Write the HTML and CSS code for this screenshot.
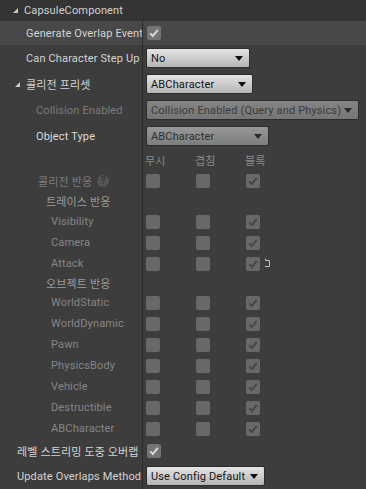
FILE: index.html
```html
<!DOCTYPE html>
<html lang="ko">
<head>
    <meta charset="UTF-8">
    <title>CapsuleComponent</title>
    <link rel="stylesheet" href="styles.css">
</head>
<body>
    <div class="panel">
        <!-- Заголовок категории -->
        <div class="cat-header">
            <span class="arrow"></span>
            <span>CapsuleComponent</span>
        </div>

        <div class="row row-hl h24">
            <div class="label l1">Generate Overlap Events</div>
            <div class="val"><span class="cb on"><svg viewBox="0 0 14 14"><path d="M3.2 7.4 L5.8 10 L10.8 4"/></svg></span></div>
        </div>

        <div class="row h26">
            <div class="label l1">Can Character Step Up</div>
            <div class="val"><div class="combo w103">No<span class="tri"></span></div></div>
        </div>

        <div class="row h26">
            <div class="label l1 sub"><span class="arrow small"></span>콜리전 프리셋</div>
            <div class="val"><div class="combo w107">ABCharacter<span class="tri"></span></div></div>
        </div>

        <div class="row h26">
            <div class="label l2 dim">Collision Enabled</div>
            <div class="val"><div class="combo disabled w212">Collision Enabled (Query and Physics)<span class="tri"></span></div></div>
        </div>

        <div class="row h26">
            <div class="label l2 bright">Object Type</div>
            <div class="val"><div class="combo disabled light w123">ABCharacter<span class="tri"></span></div></div>
        </div>

        <div class="row h21">
            <div class="label"></div>
            <div class="val checks heads">
                <span class="col">무시</span>
                <span class="col">겹침</span>
                <span class="col">블록</span>
            </div>
        </div>

        <div class="row h21">
            <div class="label l2b dim">콜리전 반응 <span class="help">?</span></div>
            <div class="val checks" data-row="collision"></div>
        </div>

        <div class="row h20">
            <div class="label l3 group">트레이스 반응</div>
            <div class="val"></div>
        </div>
        <div id="traceRows"></div>

        <div class="row h18">
            <div class="label l3 group">오브젝트 반응</div>
            <div class="val"></div>
        </div>
        <div id="objectRows"></div>

        <div class="row h24">
            <div class="label l0">레벨 스트리밍 도중 오버랩 이벤트 생성</div>
            <div class="val"><span class="cb on"><svg viewBox="0 0 14 14"><path d="M3.2 7.4 L5.8 10 L10.8 4"/></svg></span></div>
        </div>

        <div class="row h26">
            <div class="label l0">Update Overlaps Method</div>
            <div class="val"><div class="combo auto">Use Config Default<span class="tri"></span></div></div>
        </div>
    </div>

    <script>
        document.addEventListener('DOMContentLoaded', function() {
            const check = '<svg viewBox="0 0 14 14"><path d="M3.2 7.4 L5.8 10 L10.8 4"/></svg>';
            const reset = '<svg class="reset" viewBox="0 0 7 10"><path d="M1.5 0.5 V2.5 H5.5 V8.5 H1"/></svg>';

            // Строка из трёх флажков: игнор / перекрытие / блок
            function checkCells(resetIcon) {
                return '<span class="col"><span class="cb"></span></span>' +
                       '<span class="col"><span class="cb"></span></span>' +
                       '<span class="col"><span class="cb">' + check + '</span>' + (resetIcon ? reset : '') + '</span>';
            }

            function addRows(target, names) {
                const box = document.getElementById(target);
                names.forEach(function(name) {
                    const row = document.createElement('div');
                    row.className = 'row h21';
                    row.innerHTML = '<div class="label l4 dim2">' + name + '</div>' +
                                    '<div class="val checks">' + checkCells(name === 'Attack') + '</div>';
                    box.appendChild(row);
                });
            }

            document.querySelector('[data-row="collision"]').innerHTML = checkCells(false);
            addRows('traceRows', ['Visibility', 'Camera', 'Attack']);
            addRows('objectRows', ['WorldStatic', 'WorldDynamic', 'Pawn', 'PhysicsBody', 'Vehicle', 'Destructible', 'ABCharacter']);
        });
    </script>
</body>
</html>
```

FILE: styles.css
```css
* {
    margin: 0;
    padding: 0;
    box-sizing: border-box;
}

body {
    font-family: Roboto, 'Noto Sans CJK KR', sans-serif;
    font-size: 11px;
    letter-spacing: 0.15px;
    background: #3d3d3d;
    color: #d4d4d4;
    width: 366px;
    height: 489px;
    overflow: hidden;
}

.cat-header {
    height: 21px;
    background: #343434;
    display: flex;
    align-items: center;
    padding-left: 13px;
    color: #d2d2d2;
}

.arrow {
    display: inline-block;
    width: 0;
    height: 0;
    border-left: 5px solid transparent;
    border-bottom: 5px solid #c8c8c8;
    margin-right: 6px;
}

.arrow.small {
    margin-left: -11px;
    margin-right: 6px;
}

.row {
    display: grid;
    grid-template-columns: 142px 1fr;
}

.row-hl {
    background: #484848;
}

.h18 { height: 18px; }
.h20 { height: 20px; }
.h21 { height: 21px; }
.h24 { height: 24px; }
.h26 { height: 26px; }

.label {
    display: flex;
    align-items: center;
    white-space: nowrap;
    overflow: hidden;
}

.l0 { padding-left: 17px; }
.l1 { padding-left: 26px; }
.l2 { padding-left: 36px; }
.l2b { padding-left: 38px; }
.l3 { padding-left: 46px; }
.l4 { padding-left: 51px; }

.dim { color: #7c7c7c; }
.dim2 { color: #868686; }
.bright { color: #dcdcdc; }
.group { color: #9c9c9c; }

.val {
    border-left: 1px solid #2a2a2a;
    padding-left: 3px;
    display: flex;
    align-items: center;
}

.checks .col {
    width: 50px;
    display: flex;
    align-items: center;
}

.heads .col {
    color: #8a8a8a;
    margin-left: -1px;
    margin-right: 1px;
}

.cb {
    width: 14px;
    height: 14px;
    border-radius: 2px;
    background: #686868;
    display: inline-flex;
    flex-shrink: 0;
}

.cb svg {
    width: 14px;
    height: 14px;
    fill: none;
    stroke: #474747;
    stroke-width: 2;
}

.cb.on {
    background: #747474;
    margin-left: 1px;
}

.cb.on svg {
    stroke: #d6d6d6;
}

.reset {
    width: 7px;
    height: 10px;
    margin-left: 4px;
    margin-top: -2px;
    fill: none;
    stroke: #c2c2b0;
    stroke-width: 1;
}

.help {
    display: inline-flex;
    justify-content: center;
    align-items: center;
    width: 12px;
    height: 12px;
    margin-left: 5px;
    border-radius: 50%;
    background: #545454;
    color: #383838;
    font-size: 10px;
    font-weight: 700;
    letter-spacing: 0;
}

.combo {
    height: 20px;
    border: 1px solid #2c2c2c;
    border-radius: 2px;
    background: linear-gradient(#e4e4e4 0%, #c8c8c8 60%, #b4b4b4 100%);
    color: #141414;
    display: flex;
    align-items: center;
    justify-content: space-between;
    padding: 0 6px 0 4px;
    white-space: nowrap;
}

.combo.disabled {
    background: linear-gradient(#848484, #767676);
    color: #3a3a3a;
}

.combo.disabled.light {
    background: linear-gradient(#979797, #7e7e7e);
    color: #2e2e2e;
}

.combo.auto {
    gap: 3px;
}

.w103 { width: 104px; }
.w107 { width: 107px; }
.w212 { width: 213px; }
.w123 { width: 123px; }

.tri {
    width: 0;
    height: 0;
    border-left: 4px solid transparent;
    border-right: 4px solid transparent;
    border-top: 5px solid #111111;
    margin-left: 2px;
}

.combo.disabled .tri {
    border-top-color: #2a2a2a;
}
```
